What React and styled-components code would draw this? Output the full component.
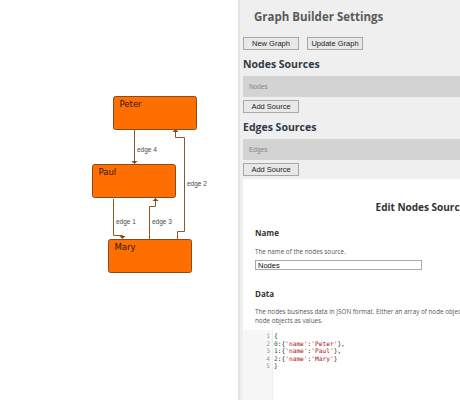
import React from 'react'
import styled, { createGlobalStyle } from 'styled-components'

const GlobalStyle = createGlobalStyle`
    html, body {
        margin: 0;
        padding: 0;
        background: #ffffff;
        overflow: hidden;
    }
`

const Page = styled.div`
    display: flex;
    width: 460px;
    height: 400px;
    overflow: hidden;
    font-family: "Open Sans", "Liberation Sans", sans-serif;
`

const Canvas = styled.div`
    flex: none;
    width: 238px;
    height: 400px;
    background: #ffffff;
`

const Panel = styled.div`
    flex: none;
    width: 360px;
    height: 400px;
    box-sizing: border-box;
    background: #efefef;
    border-left: 2px solid #e3e3e3;
    padding-left: 3px;
    display: flex;
    flex-direction: column;
`

const Title = styled.h1`
    margin: 0;
    padding: 9px 0 0 11px;
    height: 28px;
    box-sizing: border-box;
    font-size: 11.5px;
    font-weight: 700;
    color: #5a5a5a;
`

const ButtonRow = styled.div`
    display: flex;
    gap: 8px;
    margin-top: 9px;
`

const Button = styled.button`
    box-sizing: border-box;
    height: 13px;
    width: ${props => props.w}px;
    padding: 0;
    background: #e8e8e8;
    border: 1px solid #a8a8a8;
    border-radius: 0;
    font-family: "Liberation Sans", Arial, sans-serif;
    font-size: 7.5px;
    color: #222;
    line-height: 11px;
`

const SectionTitle = styled.h2`
    margin: 0;
    height: 26px;
    padding-top: 7px;
    box-sizing: border-box;
    font-size: 10.5px;
    font-weight: 700;
    color: #2f3a45;
`

const SourceBar = styled.div`
    height: 21px;
    background: #d3d3d3;
    display: flex;
    align-items: center;
    padding-left: 6px;
    font-family: "Liberation Sans", Arial, sans-serif;
    font-size: 6.5px;
    color: #858585;
    margin-bottom: 3px;
`

const AddRow = styled.div`
    display: flex;
    margin-bottom: ${props => props.mb}px;
`

const EditPanel = styled.div`
    flex: 1;
    background: #ffffff;
    display: flex;
    flex-direction: column;
`

const EditTitle = styled.h3`
    margin: 0;
    padding-top: 21px;
    height: 49px;
    box-sizing: border-box;
    text-align: center;
    font-size: 10px;
    font-weight: 700;
    color: #333;
`

const Field = styled.div`
    padding-left: 12px;
    margin-top: ${props => props.mt || 0}px;
`

const FieldLabel = styled.div`
    font-size: 8px;
    font-weight: 700;
    color: #333;
    line-height: 10px;
`

const Help = styled.div`
    font-size: 6.3px;
    color: #555;
    line-height: 9px;
    white-space: nowrap;
    margin-top: ${props => props.mt}px;
`

const TextInput = styled.input`
    box-sizing: border-box;
    display: block;
    width: 167px;
    height: 10px;
    margin-top: 4px;
    padding: 0 2px;
    border: 1px solid #aaa;
    font-family: "Liberation Sans", Arial, sans-serif;
    font-size: 7.5px;
    color: #111;
    outline: none;
`

const Editor = styled.div`
    flex: 1;
    display: flex;
    margin-top: 5px;
    font-family: "DejaVu Sans Mono", "Liberation Mono", monospace;
    font-size: 6.2px;
    line-height: 7.5px;
`

const Gutter = styled.div`
    width: 27px;
    padding: 2px 2px 0 0;
    text-align: right;
    color: #999;
    background: #f7f7f7;
    border-right: 1px solid #eee;
`

const Code = styled.div`
    flex: 1;
    padding: 2px 0 0 1px;
    color: #222;
    white-space: pre;
`

const Num = styled.span`
    color: #116644;
`

const Str = styled.span`
    color: #aa1111;
`

const EdgePath = styled.path`
    fill: none;
    stroke: #8a5a2c;
    stroke-width: 1;
`

const NodeRect = styled.rect`
    fill: #ff6e00;
    stroke: #8a4a1a;
    stroke-width: 1;
`

const nodes = [
    { name: 'Peter', x: 113.5, y: 96.5 },
    { name: 'Paul', x: 92.5, y: 164.5 },
    { name: 'Mary', x: 108.5, y: 239.5 },
]

const edges = [
    { d: 'M134.5 130 V162', label: 'edge 4', lx: 137, ly: 152 },
    { d: 'M113.5 199 V235.5 H122.5 V237', label: 'edge 1', lx: 116, ly: 224 },
    { d: 'M149.5 239 V206.5 H155.5 V200', label: 'edge 3', lx: 152, ly: 224 },
    { d: 'M177.5 239 V231.5 H184.5 V137.5 H175.5 V131', label: 'edge 2', lx: 187, ly: 186 },
]

const arrows = [
    [134.5, 164, 'down'],
    [122.5, 239, 'down'],
    [155.5, 198, 'up'],
    [175.5, 129, 'up'],
]

const Graph = () => (
    <svg width="238" height="400" viewBox="0 0 238 400">
        {edges.map(e => (
            <g key={e.label}>
                <EdgePath d={e.d} />
                <text x={e.lx} y={e.ly} fontFamily="Liberation Sans, Arial, sans-serif" fontSize="6.5" fill="#4a4a4a">
                    {e.label}
                </text>
            </g>
        ))}
        {arrows.map(([x, y, dir], i) => (
            <path
                key={i}
                d={dir === 'down'
                    ? `M${x - 3} ${y - 3} H${x + 3} L${x} ${y} Z`
                    : `M${x - 3} ${y + 3} H${x + 3} L${x} ${y} Z`}
                fill="#7a4a20"
            />
        ))}
        {nodes.map(n => (
            <g key={n.name}>
                <NodeRect x={n.x} y={n.y} width="83" height="33" rx="2" />
                <text x={n.x + 6} y={n.y + 10} fontFamily="DejaVu Sans, Verdana, sans-serif" fontSize="8.5" fill="#2a1a0a">
                    {n.name}
                </text>
            </g>
        ))}
    </svg>
)

const App = () => {
    return (
        <>
            <GlobalStyle />
            <Page>
                <Canvas>
                    <Graph />
                </Canvas>
                <Panel>
                    <Title>Graph Builder Settings</Title>
                    <ButtonRow>
                        <Button w={56}>New Graph</Button>
                        <Button w={56}>Update Graph</Button>
                    </ButtonRow>
                    <SectionTitle>Nodes Sources</SectionTitle>
                    <SourceBar>Nodes</SourceBar>
                    <AddRow mb={0}>
                        <Button w={56}>Add Source</Button>
                    </AddRow>
                    <SectionTitle>Edges Sources</SectionTitle>
                    <SourceBar>Edges</SourceBar>
                    <AddRow mb={3}>
                        <Button w={56}>Add Source</Button>
                    </AddRow>
                    <EditPanel>
                        <EditTitle>Edit Nodes Source</EditTitle>
                        <Field>
                            <FieldLabel>Name</FieldLabel>
                            <Help mt={9}>The name of the nodes source.</Help>
                            <TextInput defaultValue="Nodes" />
                        </Field>
                        <Field mt={19}>
                            <FieldLabel>Data</FieldLabel>
                            <Help mt={8}>
                                The nodes business data in JSON format. Either an array of node objects or an object with keys and
                                <br />
                                node objects as values.
                            </Help>
                        </Field>
                        <Editor>
                            <Gutter>
                                {[1, 2, 3, 4, 5].map(n => <div key={n}>{n}</div>)}
                            </Gutter>
                            <Code>
                                <div>{'{'}</div>
                                <div><Num>0</Num>:{'{'}<Str>'name'</Str>:<Str>'Peter'</Str>{'},'}</div>
                                <div><Num>1</Num>:{'{'}<Str>'name'</Str>:<Str>'Paul'</Str>{'},'}</div>
                                <div><Num>2</Num>:{'{'}<Str>'name'</Str>:<Str>'Mary'</Str>{'}'}</div>
                                <div>{'}'}</div>
                            </Code>
                        </Editor>
                    </EditPanel>
                </Panel>
            </Page>
        </>
    )
}

export default App
